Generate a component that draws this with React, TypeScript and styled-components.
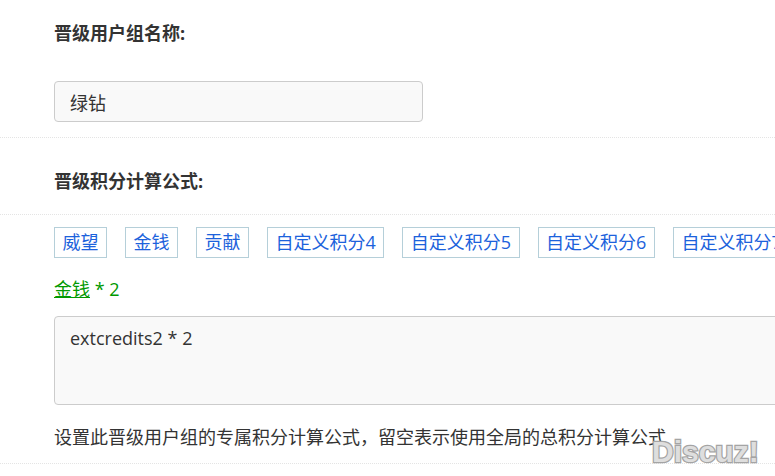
import styled, { createGlobalStyle } from "styled-components";

const FONT = `"Open Sans", "Noto Sans CJK SC", sans-serif`;

const CREDITS = ["威望", "金钱", "贡献", "自定义积分4", "自定义积分5", "自定义积分6", "自定义积分7"];

const GlobalStyle = createGlobalStyle`
  html, body {
    margin: 0;
    padding: 0;
    height: 476px;
    overflow: hidden;
    background: #fff;
  }
`;

export default function App() {
  return (
    <>
      <GlobalStyle />
      <Page>
        <TitleRow>
          <Label>晋级用户组名称:</Label>
        </TitleRow>
        <InputRow>
          <TextInput readOnly value="绿钻" />
        </InputRow>
        <FormulaTitleRow>
          <Label>晋级积分计算公式:</Label>
        </FormulaTitleRow>
        <FormulaRow>
          <TagList>
            {CREDITS.map((name) => (
              <Tag key={name}>{name}</Tag>
            ))}
          </TagList>
          <Preview>
            <u>金钱</u> * 2
          </Preview>
          <FormulaInput readOnly value="extcredits2 * 2" />
          <Hint>设置此晋级用户组的专属积分计算公式，留空表示使用全局的总积分计算公式</Hint>
        </FormulaRow>
      </Page>
      <Watermark>Discuz!</Watermark>
    </>
  );
}

const Page = styled.div`
  width: 775px;
  height: 476px;
  overflow: hidden;
  font-family: ${FONT};
  font-size: 18px;
  color: #333;
`;

const TitleRow = styled.div`
  height: 81px;
  padding: 21px 0 0 54px;
  box-sizing: border-box;
  line-height: 24px;
`;

const Label = styled.div`
  font-weight: 700;
  color: #333;
`;

const InputRow = styled.div`
  height: 57px;
  padding-left: 54px;
  box-sizing: border-box;
  border-bottom: 1px dotted #e4e4e4;
`;

const TextInput = styled.input`
  display: block;
  width: 369px;
  height: 41px;
  box-sizing: border-box;
  padding: 0 15px;
  border: 1px solid #ccc;
  border-radius: 4px;
  background: #f9f9f9;
  font: inherit;
  color: #333;
  outline: none;
`;

const FormulaTitleRow = styled.div`
  height: 77px;
  padding: 31px 0 0 54px;
  box-sizing: border-box;
  line-height: 24px;
  border-bottom: 1px dotted #e4e4e4;
`;

const FormulaRow = styled.div`
  height: 249px;
  padding: 12px 0 0 54px;
  box-sizing: border-box;
  border-bottom: 1px dotted #e4e4e4;
`;

const TagList = styled.div`
  display: flex;
  gap: 18px;
  width: 800px;
`;

const Tag = styled.a`
  flex: none;
  height: 31px;
  line-height: 29px;
  padding: 0 7.5px;
  box-sizing: border-box;
  border: 1px solid #b5cfd9;
  color: #1c62dc;
  white-space: nowrap;
`;

const Preview = styled.div`
  margin-top: 19px;
  line-height: 24px;
  color: #090;
`;

const FormulaInput = styled.textarea`
  display: block;
  width: 800px;
  height: 89px;
  margin-top: 15px;
  box-sizing: border-box;
  padding: 8px 15px;
  border: 1px solid #ccc;
  border-radius: 4px;
  background: #f9f9f9;
  font: inherit;
  line-height: 26px;
  color: #333;
  outline: none;
  resize: none;
`;

const Hint = styled.div`
  margin-top: 20px;
  line-height: 24px;
  white-space: nowrap;
`;

const Watermark = styled.div`
  position: absolute;
  left: 652px;
  top: 434px;
  font-family: "Liberation Sans", sans-serif;
  font-size: 30px;
  line-height: 36px;
  font-weight: 700;
  color: #dedede;
  -webkit-text-stroke: 2.5px #a4a4a4;
  paint-order: stroke fill;
`;
